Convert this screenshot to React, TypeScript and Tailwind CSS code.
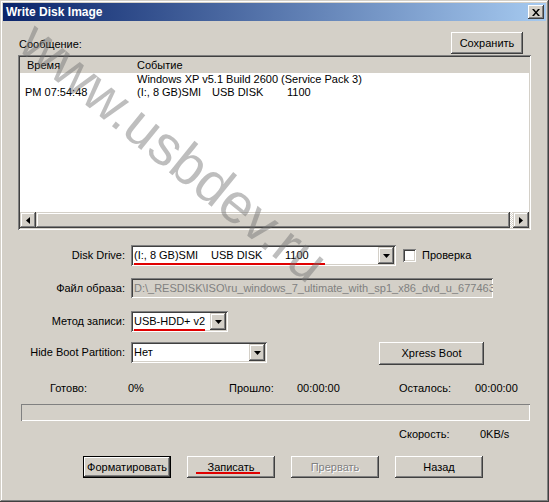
import React from "react";

const font = "font-['Liberation_Sans',Arial,sans-serif]";

function DownArrow() {
  return (
    <svg width="7" height="4" viewBox="0 0 7 4">
      <path d="M0 0h7L3.5 4z" fill="#000" />
    </svg>
  );
}

function ComboButton() {
  return (
    <div className="flex h-[17px] w-[16px] shrink-0 items-center justify-center bg-[#d4d0c8] shadow-[inset_-1px_-1px_#404040,inset_1px_1px_#d4d0c8,inset_-2px_-2px_#808080,inset_2px_2px_#ffffff]">
      <DownArrow />
    </div>
  );
}

function Button({ label, width, disabled, isDefault, underline }: { label: string; width: string; disabled?: boolean; isDefault?: boolean; underline?: boolean }) {
  return (
    <div
      className={`relative flex h-[22px] shrink-0 items-center justify-center bg-[#d4d0c8] ${width} ${
        isDefault
          ? "shadow-[inset_0_0_0_1px_#000000,inset_-2px_-2px_#404040,inset_2px_2px_#ffffff,inset_-3px_-3px_#808080]"
          : "shadow-[inset_-1px_-1px_#404040,inset_1px_1px_#ffffff,inset_-2px_-2px_#808080,inset_2px_2px_#d4d0c8]"
      }`}
    >
      <span className={disabled ? "text-[#808080] [text-shadow:1px_1px_0_#ffffff]" : "text-black"}>{label}</span>
      {underline && <div className="absolute bottom-[4px] left-[9px] h-[2px] w-[64px] bg-[#e00000]" />}
    </div>
  );
}

export default function App() {
  return (
    <div className={`relative h-[502px] w-[549px] overflow-hidden bg-[#d4d0c8] text-[11px] leading-[13px] text-black ${font} shadow-[inset_-1px_-1px_#404040,inset_1px_1px_#d4d0c8,inset_-2px_-2px_#808080,inset_2px_2px_#ffffff]`}>
      {/* title bar */}
      <div className="mx-[3px] mt-[3px] flex h-[18px] items-center bg-[linear-gradient(to_right,#0a246a,#a6caf0)] pl-[3px] pr-[2px]">
        <span className="text-[12px] font-bold text-white">Write Disk Image</span>
        <div className="ml-auto flex h-[14px] w-[16px] items-center justify-center bg-[#d4d0c8] shadow-[inset_-1px_-1px_#404040,inset_1px_1px_#ffffff,inset_-2px_-2px_#808080,inset_2px_2px_#d4d0c8]">
          <svg width="8" height="7" viewBox="0 0 8 7">
            <path d="M0 0h2l2 2.5L6 0h2L5 3.5 8 7H6L4 4.5 2 7H0l3-3.5z" fill="#000" />
          </svg>
        </div>
      </div>

      {/* message header */}
      <div className="mt-[11px] flex h-[22px] items-end">
        <span className="mb-[3px] ml-[19px]">Сообщение:</span>
        <div className="ml-auto mr-[26px] self-start">
          <Button label="Сохранить" width="w-[72px]" />
        </div>
      </div>

      {/* log list */}
      <div className="ml-[18px] mt-[1px] flex h-[175px] w-[513px] flex-col bg-white p-[2px] shadow-[inset_1px_1px_#808080,inset_-1px_-1px_#ffffff,inset_2px_2px_#404040,inset_-2px_-2px_#d4d0c8]">
        <div className="flex h-[16px] shrink-0 items-center bg-[#d4d0c8]">
          <span className="w-[117px] pl-[7px]">Время</span>
          <span>Событие</span>
        </div>
        <div className="flex-1 whitespace-nowrap">
          <div className="flex h-[13px]">
            <span className="w-[117px]" />
            <span>Windows XP v5.1 Build 2600 (Service Pack 3)</span>
          </div>
          <div className="flex h-[13px]">
            <span className="w-[117px] pl-[5px]">PM 07:54:48</span>
            <span className="w-[75px]">(I:, 8 GB)SMI</span>
            <span className="w-[75px]">USB DISK</span>
            <span>1100</span>
          </div>
        </div>
        <div className="flex h-[16px] shrink-0 bg-[#d4d0c8]">
          <div className="flex w-[16px] items-center justify-center shadow-[inset_-1px_-1px_#404040,inset_1px_1px_#d4d0c8,inset_-2px_-2px_#808080,inset_2px_2px_#ffffff]">
            <svg width="4" height="7" viewBox="0 0 4 7">
              <path d="M4 0v7L0 3.5z" fill="#000" />
            </svg>
          </div>
          <div className="flex-1 shadow-[inset_-1px_-1px_#404040,inset_1px_1px_#d4d0c8,inset_-2px_-2px_#808080,inset_2px_2px_#ffffff]" />
          <div className="w-[3px] bg-[repeating-conic-gradient(#ffffff_0_25%,#d4d0c8_0_50%)] bg-[length:2px_2px]" />
          <div className="flex w-[16px] items-center justify-center shadow-[inset_-1px_-1px_#404040,inset_1px_1px_#d4d0c8,inset_-2px_-2px_#808080,inset_2px_2px_#ffffff]">
            <svg width="4" height="7" viewBox="0 0 4 7">
              <path d="M0 0v7L4 3.5z" fill="#000" />
            </svg>
          </div>
        </div>
      </div>

      {/* Disk drive */}
      <div className="mt-[15px] flex h-[21px] items-center">
        <span className="w-[125px] text-right">Disk Drive:</span>
        <div className="relative ml-[6px] flex h-[21px] w-[265px] items-center bg-white p-[2px] shadow-[inset_1px_1px_#808080,inset_-1px_-1px_#ffffff,inset_2px_2px_#404040,inset_-2px_-2px_#d4d0c8]">
          <div className="flex flex-1 whitespace-nowrap pb-[1px] pl-[1px]">
            <span className="w-[77px]">(I:, 8 GB)SMI</span>
            <span className="w-[74px]">USB DISK</span>
            <span>1100</span>
          </div>
          <ComboButton />
          <div className="absolute bottom-[1px] left-[3px] h-[2px] w-[191px] bg-[#e00000]" />
        </div>
        <div className="ml-[7px] h-[13px] w-[13px] bg-white shadow-[inset_1px_1px_#808080,inset_-1px_-1px_#ffffff,inset_2px_2px_#404040,inset_-2px_-2px_#d4d0c8]" />
        <span className="ml-[6px]">Проверка</span>
      </div>

      {/* Image file */}
      <div className="mt-[12px] flex h-[20px] items-center">
        <span className="w-[125px] text-right">Файл образа:</span>
        <div className="ml-[6px] flex h-[20px] w-[362px] items-center overflow-hidden whitespace-nowrap bg-[#d4d0c8] px-[3px] text-[#808080] shadow-[inset_1px_1px_#808080,inset_-1px_-1px_#ffffff,inset_2px_2px_#404040,inset_-2px_-2px_#d4d0c8]">
          D:\_RESDISK\ISO\ru_windows_7_ultimate_with_sp1_x86_dvd_u_677463
        </div>
      </div>

      {/* Write method */}
      <div className="mt-[13px] flex h-[21px] items-center">
        <span className="w-[125px] text-right">Метод записи:</span>
        <div className="relative ml-[6px] flex h-[21px] w-[97px] items-center bg-white p-[2px] shadow-[inset_1px_1px_#808080,inset_-1px_-1px_#ffffff,inset_2px_2px_#404040,inset_-2px_-2px_#d4d0c8]">
          <span className="flex-1 whitespace-nowrap pb-[1px] pl-[1px]">USB-HDD+ v2</span>
          <ComboButton />
          <div className="absolute bottom-[1px] left-[3px] h-[2px] w-[71px] bg-[#e00000]" />
        </div>
      </div>

      {/* Hide boot partition */}
      <div className="mt-[10px] flex h-[23px] items-start">
        <div className="flex h-[21px] w-[125px] items-center justify-end">Hide Boot Partition:</div>
        <div className="ml-[6px] flex h-[21px] w-[136px] items-center bg-white p-[2px] shadow-[inset_1px_1px_#808080,inset_-1px_-1px_#ffffff,inset_2px_2px_#404040,inset_-2px_-2px_#d4d0c8]">
          <span className="flex-1 pl-[1px]">Нет</span>
          <ComboButton />
        </div>
        <div className="ml-[112px]">
          <div className="flex h-[23px] w-[105px] items-center justify-center shadow-[inset_-1px_-1px_#404040,inset_1px_1px_#ffffff,inset_-2px_-2px_#808080,inset_2px_2px_#d4d0c8]">
            Xpress Boot
          </div>
        </div>
      </div>

      {/* status */}
      <div className="mt-[17px] flex h-[13px] whitespace-nowrap pl-[50px]">
        <span className="w-[78px]">Готово:</span>
        <span className="w-[101px]">0%</span>
        <span className="w-[68px]">Прошло:</span>
        <span className="w-[102px]">00:00:00</span>
        <span className="w-[76px]">Осталось:</span>
        <span>00:00:00</span>
      </div>

      {/* progress */}
      <div className="ml-[21px] mt-[9px] h-[17px] w-[509px] shadow-[inset_1px_1px_#808080,inset_-1px_-1px_#ffffff]" />

      {/* speed */}
      <div className="mt-[7px] flex h-[13px] whitespace-nowrap pl-[399px]">
        <span className="w-[81px]">Скорость:</span>
        <span>0KB/s</span>
      </div>

      {/* buttons */}
      <div className="mt-[15px] flex gap-[16px] pl-[83px]">
        <Button label="Форматировать" width="w-[88px]" isDefault />
        <Button label="Записать" width="w-[88px]" underline />
        <Button label="Прервать" width="w-[88px]" disabled />
        <Button label="Назад" width="w-[88px]" />
      </div>

      {/* watermark */}
      <div className="pointer-events-none absolute left-[174px] top-[152px] -translate-x-1/2 -translate-y-1/2 rotate-[39deg] whitespace-nowrap font-['Liberation_Sans',Arial,sans-serif] text-[56px] leading-none text-[rgba(110,110,110,0.45)]">
        www.usbdev.ru
      </div>
    </div>
  );
}
